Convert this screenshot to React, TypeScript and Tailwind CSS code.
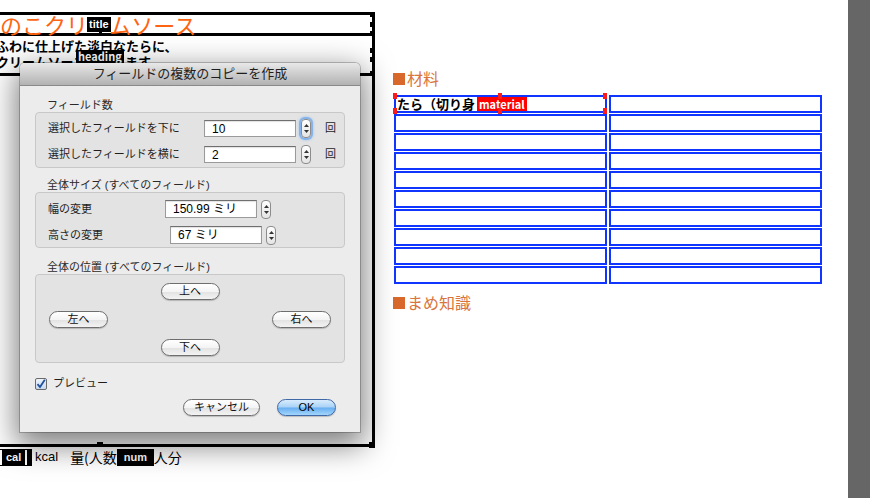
import React from "react";

const handleYs = [12, 22, 31, 48, 57, 71];

function Stepper({ focus = false }: { focus?: boolean }) {
  return (
    <div
      className={`flex h-[19px] w-[10px] shrink-0 flex-col items-center justify-center gap-[3px] rounded-[4px] border border-[#8c8c8c] bg-gradient-to-b from-white to-[#e4e4e4] ${
        focus ? "shadow-[0_0_0_2px_#86b4ea,0_0_3px_2px_#9fc3ef]" : ""
      }`}
    >
      <svg width="5" height="3" viewBox="0 0 5 3">
        <path d="M2.5 0L5 3H0z" fill="#333" />
      </svg>
      <svg width="5" height="3" viewBox="0 0 5 3">
        <path d="M0 0H5L2.5 3z" fill="#333" />
      </svg>
    </div>
  );
}

function Field({ value, h = "h-[17px]" }: { value: string; h?: string }) {
  return (
    <div
      className={`${h} w-[92px] shrink-0 border border-[#9a9a9a] border-t-[#6f6f6f] bg-white pl-[7px] text-[12px] leading-[16px] text-black shadow-[inset_0_1px_1px_rgba(0,0,0,0.12)]`}
    >
      {value}
    </div>
  );
}

function PushButton({ label, w = "w-[59px]" }: { label: string; w?: string }) {
  return (
    <button
      type="button"
      className={`${w} h-[17px] rounded-full border border-[#6e6e6e] bg-[linear-gradient(to_bottom,#ffffff_0%,#f4f4f4_50%,#e2e2e2_52%,#f3f3f3_100%)] text-[11px] leading-[15px] text-[#111] shadow-[0_1px_1px_rgba(0,0,0,0.2)]`}
    >
      {label}
    </button>
  );
}

function GroupLabel({ children, mt }: { children: React.ReactNode; mt: string }) {
  return <p className={`${mt} pl-[12px] text-[11px] leading-[13px] text-[#2a2a2a]`}>{children}</p>;
}

function Header({ text }: { text: string }) {
  return (
    <div className="flex items-center">
      <span className="h-[12px] w-[12px] bg-[#d8682c]" />
      <span className="ml-[2px] text-[16px] leading-[17px] text-[#d8743c]">{text}</span>
    </div>
  );
}

function Dialog() {
  return (
    <div className="absolute left-[20px] top-[63px] h-[369px] w-[340px] overflow-hidden rounded-t-[5px] bg-[#ececec] shadow-[0_0_0_1px_rgba(0,0,0,0.22),0_10px_30px_4px_rgba(0,0,0,0.5)]">
      <div className="h-[23px] border-b border-[#8a8a8a] bg-[linear-gradient(to_bottom,#e8e8e8,#b2b2b2)] text-center text-[13px] leading-[22px] text-[#1e1e1e]">
        フィールドの複数のコピーを作成
      </div>

      <div className="px-[15px] pt-[13px] text-[11px] text-[#1e1e1e]">
        <GroupLabel mt="mt-0">フィールド数</GroupLabel>
        <div className="flex h-[56px] flex-col gap-[8px] rounded-[4px] border border-[#c8c8c8] bg-[#e3e3e3] pl-[12px] pt-[6px]">
          <div className="flex h-[18px] items-center">
            <span className="w-[156px]">選択したフィールドを下に</span>
            <Field value="10" />
            <span className="ml-[5px]">
              <Stepper focus />
            </span>
            <span className="ml-[14px]">回</span>
          </div>
          <div className="flex h-[18px] items-center">
            <span className="w-[156px]">選択したフィールドを横に</span>
            <Field value="2" />
            <span className="ml-[5px]">
              <Stepper />
            </span>
            <span className="ml-[14px]">回</span>
          </div>
        </div>

        <GroupLabel mt="mt-[11px]">全体サイズ (すべてのフィールド)</GroupLabel>
        <div className="flex h-[56px] flex-col gap-[8px] rounded-[4px] border border-[#c8c8c8] bg-[#e3e3e3] pl-[12px] pt-[7px]">
          <div className="flex h-[18px] items-center">
            <span className="w-[117px]">幅の変更</span>
            <Field value="150.99 ミリ" h="h-[18px]" />
            <span className="ml-[4px]">
              <Stepper />
            </span>
          </div>
          <div className="flex h-[18px] items-center">
            <span className="w-[122px]">高さの変更</span>
            <Field value="67 ミリ" h="h-[18px]" />
            <span className="ml-[4px]">
              <Stepper />
            </span>
          </div>
        </div>

        <GroupLabel mt="mt-[13px]">全体の位置 (すべてのフィールド)</GroupLabel>
        <div className="flex h-[89px] flex-col items-center gap-[11px] rounded-[4px] border border-[#c8c8c8] bg-[#e3e3e3] pt-[8px]">
          <PushButton label="上へ" />
          <div className="flex w-full justify-between px-[13px]">
            <PushButton label="左へ" />
            <PushButton label="右へ" />
          </div>
          <PushButton label="下へ" />
        </div>

        <div className="mt-[14px] flex items-center">
          <span className="flex h-[12px] w-[12px] items-center justify-center rounded-[2px] border border-[#6a6a6a] bg-gradient-to-b from-[#eef4fb] to-[#c6d8ee]">
            <svg width="10" height="10" viewBox="0 0 10 10">
              <path d="M1.5 5.2L4 8L8.8 0.8" fill="none" stroke="#1f4f9e" strokeWidth="1.8" />
            </svg>
          </span>
          <span className="ml-[6px] text-[11px] leading-[13px]">プレビュー</span>
        </div>

        <div className="mt-[9px] flex justify-end gap-[17px] pr-[9px]">
          <PushButton label="キャンセル" w="w-[77px]" />
          <button
            type="button"
            className="h-[17px] w-[59px] rounded-full border border-[#3e68a6] bg-[linear-gradient(to_bottom,#d8ecfd_0%,#a9d2f6_48%,#66aef0_52%,#a3d5fb_100%)] text-[11px] leading-[15px] text-black shadow-[0_1px_1px_rgba(0,0,0,0.2)]"
          >
            OK
          </button>
        </div>
      </div>
    </div>
  );
}

export default function App() {
  return (
    <div className="relative flex h-[498px] w-[870px] overflow-hidden bg-white font-['Liberation_Sans','Noto_Sans_CJK_JP',sans-serif] text-black">
      {/* layout canvas, left part */}
      <div className="relative w-[375px] shrink-0 pt-[12px]">
        <div className="relative h-[24px] border-y-[3px] border-r-[3px] border-black">
          <p className="-mt-[2px] whitespace-nowrap font-['Noto_Sans_CJK_JP',sans-serif] text-[22px] leading-[22px] text-[#ff6410]">
            のこクリームソース
          </p>
          <span className="absolute left-[87px] top-[2px] h-[15px] bg-black px-[2px] text-[11px] font-bold leading-[15px] text-white">
            title
          </span>
          <span className="absolute left-[99px] top-[16px] h-[5px] w-[3px] bg-black" />
        </div>

        <div className="relative h-[40px] border-b-[3px] border-r-[3px] border-black pt-[2px] font-['Noto_Sans_CJK_JP',sans-serif] text-[13px] font-bold leading-[16px]">
          <p className="-ml-[4px] whitespace-nowrap">ふわに仕上げた淡白なたらに、</p>
          <p className="-ml-[4px] whitespace-nowrap">クリームソースに絡みます</p>
          <span className="absolute left-[76px] top-[14px] h-[13px] bg-black px-[2px] text-[11px] font-bold leading-[13px] text-white">
            heading
          </span>
        </div>

        <div className="relative h-[371px] border-b-[3px] border-r-[3px] border-black">
          <span className="absolute bottom-[-3px] left-[97px] h-[5px] w-[6px] bg-black" />
          <span className="absolute bottom-[-4px] right-[-3px] h-[6px] w-[6px] bg-black" />
        </div>

        <div className="flex h-[20px] items-center whitespace-nowrap text-[14px] leading-[18px]">
          <span className="relative h-[17px] w-[32px] bg-black text-[11px] font-bold leading-[17px] text-white">
            <span className="absolute left-0 top-[1px] h-[15px] w-[2px] bg-white" />
            <span className="absolute left-[6px]">cal</span>
            <span className="absolute left-[25px] top-[1px] h-[15px] w-[2px] bg-white" />
          </span>
          <span className="ml-[3px] text-[13px]">kcal</span>
          <span className="ml-[12px] font-['Noto_Sans_CJK_JP',sans-serif]">量(人数</span>
          <span className="h-[17px] w-[37px] bg-black text-center text-[11px] font-bold leading-[17px] text-white">num</span>
          <span className="font-['Noto_Sans_CJK_JP',sans-serif]">人分</span>
        </div>

        {handleYs.map((y) => (
          <span key={y} className="absolute right-0 h-[5px] w-[5px] bg-black" style={{ top: y }} />
        ))}
      </div>

      {/* layout canvas, right part */}
      <div className="flex-1 pl-[18px] pt-[70px] font-['Noto_Sans_CJK_JP',sans-serif]">
        <Header text="材料" />
        <div className="relative ml-[1px] mt-[8px] grid w-[428px] grid-cols-[213px_213px] gap-x-[2px] gap-y-[1px]">
          {Array.from({ length: 20 }).map((_, i) => (
            <div key={i} className="h-[18px] border-2 border-[#0f35ff]">
              {i === 0 && (
                <p className="whitespace-nowrap pl-[1px] text-[13px] font-bold leading-[14px]">たら（切り身</p>
              )}
            </div>
          ))}
          <span className="absolute left-[83px] top-[2px] h-[14px] bg-[#ff0000] px-[2px] text-[11px] font-bold leading-[14px] text-white">
            material
          </span>
          <span className="absolute left-[-1px] top-[-2px] h-[6px] w-[4px] bg-[#ff1a1a]" />
          <span className="absolute left-[-1px] top-[13px] h-[6px] w-[4px] bg-[#ff1a1a]" />
          <span className="absolute left-[104px] top-[-2px] h-[6px] w-[4px] bg-[#ff1a1a]" />
          <span className="absolute left-[104px] top-[13px] h-[6px] w-[4px] bg-[#ff1a1a]" />
          <span className="absolute left-[209px] top-[-2px] h-[6px] w-[4px] bg-[#ff1a1a]" />
          <span className="absolute left-[209px] top-[13px] h-[6px] w-[4px] bg-[#ff1a1a]" />
        </div>
        <div className="mt-[10px]">
          <Header text="まめ知識" />
        </div>
      </div>

      <div className="w-[22px] shrink-0 bg-[#666666]" />

      <Dialog />
    </div>
  );
}
